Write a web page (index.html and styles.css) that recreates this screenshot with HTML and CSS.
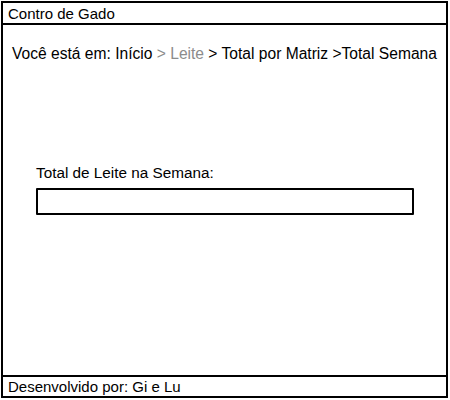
FILE: index.html
```html
<!DOCTYPE html>
<html lang="pt">
<head>
<meta charset="utf-8">
<link rel="stylesheet" href="styles.css">
</head>
<body>
<div class="frame">
  <header class="bar header">Contro de Gado</header>
  <main class="content">
    <p class="crumbs">Você está em: Início <span class="muted">&gt; Leite</span> &gt; Total por Matriz &gt;Total Semana</p>
    <div class="field">
      <label class="label">Total de Leite na Semana:</label>
      <div class="input"></div>
    </div>
  </main>
  <footer class="bar footer">Desenvolvido por: Gi e Lu</footer>
</div>
</body>
</html>
```
FILE: styles.css
```css
html, body {
  margin: 0;
  padding: 0;
  background: #fff;
}
.frame {
  box-sizing: border-box;
  margin: 1px 0 0 1px;
  width: 447px;
  height: 397px;
  border: 2px solid #000;
  display: flex;
  flex-direction: column;
  font-family: "Liberation Sans", Arial, sans-serif;
  color: #000;
}
.bar {
  box-sizing: border-box;
  padding-left: 5px;
  font-size: 15px;
  flex: none;
}
.header {
  border-bottom: 2px solid #000;
  height: 22px;
  line-height: 21px;
}
.footer {
  border-top: 2px solid #000;
  height: 21px;
  line-height: 19px;
}
.content {
  flex: 1;
  padding: 0 0 0 9px;
}
.crumbs {
  margin: 19px 0 0 0;
  font-size: 15.6px;
  line-height: 20px;
  white-space: nowrap;
}
.muted {
  color: #8c8c8c;
}
.field {
  margin: 100px 0 0 24px;
  display: flex;
  flex-direction: column;
  gap: 6px;
}
.label {
  font-size: 15.3px;
  line-height: 18px;
}
.input {
  box-sizing: border-box;
  width: 378px;
  height: 27px;
  border: 2px solid #000;
  border-radius: 1px;
}
```
